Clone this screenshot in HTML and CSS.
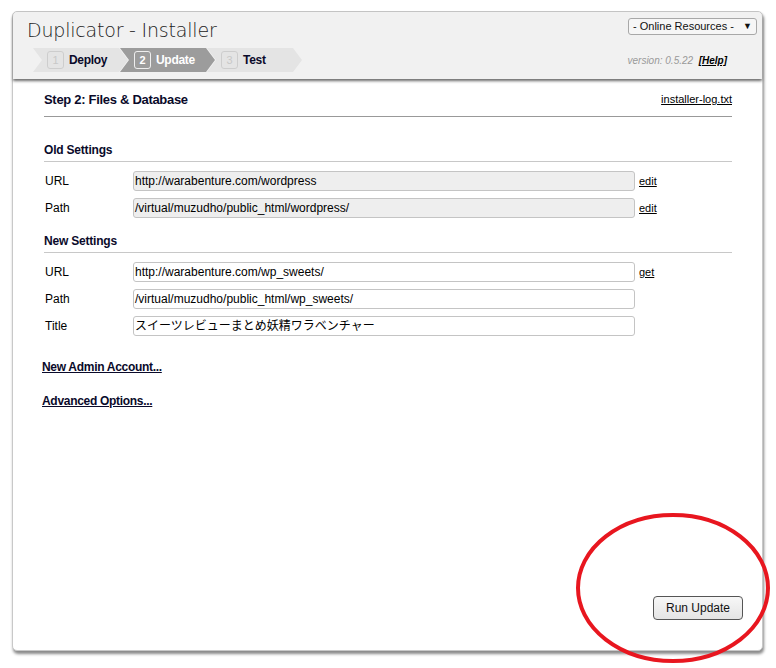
FILE: index.html
```html
<!DOCTYPE html>
<html>
<head>
<meta charset="utf-8">
<link rel="stylesheet" href="styles.css">
</head>
<body>
<div class="wrap">
  <div class="header">
    <div class="head-left">
      <div class="title">Duplicator - Installer</div>
      <div class="steps">
        <div class="step"><span class="num">1</span><span class="lbl">Deploy</span></div>
        <div class="step active"><span class="num">2</span><span class="lbl">Update</span></div>
        <div class="step"><span class="num">3</span><span class="lbl">Test</span></div>
      </div>
    </div>
    <div class="head-right">
      <div class="select"><span>- Online Resources -</span><span class="arrow">&#9660;</span></div>
      <div class="version">version: 0.5.22 &nbsp;<a class="help">[Help]</a></div>
    </div>
  </div>
  <div class="content">
    <div class="step-title">
      <span>Step 2: Files &amp; Database</span>
      <a class="log">installer-log.txt</a>
    </div>

    <div class="section">Old Settings</div>
    <div class="row">
      <label>URL</label>
      <div class="input ro">http://warabenture.com/wordpress</div>
      <a class="act">edit</a>
    </div>
    <div class="row">
      <label>Path</label>
      <div class="input ro">/virtual/muzudho/public_html/wordpress/</div>
      <a class="act">edit</a>
    </div>

    <div class="section second">New Settings</div>
    <div class="row">
      <label>URL</label>
      <div class="input">http://warabenture.com/wp_sweets/</div>
      <a class="act">get</a>
    </div>
    <div class="row">
      <label>Path</label>
      <div class="input">/virtual/muzudho/public_html/wp_sweets/</div>
    </div>
    <div class="row">
      <label>Title</label>
      <div class="input">スイーツレビューまとめ妖精ワラベンチャー</div>
    </div>

    <a class="toggle first">New Admin Account...</a>
    <a class="toggle">Advanced Options...</a>

    <div class="footer">
      <button class="btn">Run Update</button>
    </div>
  </div>
</div>
<svg class="circle" width="776" height="668" viewBox="0 0 776 668">
  <ellipse cx="673" cy="588" rx="95" ry="73" fill="none" stroke="#e8161f" stroke-width="4"/>
</svg>
</body>
</html>
```

FILE: styles.css
```css
html, body {
  margin: 0;
  padding: 0;
  background: #fff;
}
body {
  font-family: "Liberation Sans", "Noto Sans CJK JP", sans-serif;
  font-size: 12px;
  color: #000;
  width: 776px;
  height: 668px;
  position: relative;
  overflow: hidden;
}
.wrap {
  margin: 11px 0 0 12px;
  width: 749px;
  height: 638px;
  border: 1px solid #c8c8c8;
  border-radius: 5px;
  box-shadow: 1px 3px 3px #8a8a8a;
  background: #fff;
  display: flex;
  flex-direction: column;
}
.header {
  height: 67px;
  background: #f1f1f1;
  border-radius: 5px 5px 0 0;
  box-shadow: 0 2px 3px #6a6a6a;
  display: flex;
  justify-content: space-between;
  padding: 0 5px 0 14px;
  position: relative;
  z-index: 1;
}
.title {
  font-family: "DejaVu Sans", sans-serif;
  font-weight: 200;
  font-size: 19px;
  color: #222;
  margin-top: 6px;
  line-height: 24px;
  letter-spacing: -0.2px;
}
.steps {
  display: flex;
  margin: 6px 0 0 6px;
}
.step {
  width: 95px;
  height: 24px;
  background: #e4e4e4;
  clip-path: polygon(0 0, 86px 0, 95px 50%, 86px 100%, 0 100%, 9px 50%);
  display: flex;
  align-items: center;
  padding-left: 14px;
  box-sizing: border-box;
  margin-right: -8px;
}
.step.active {
  background: #9c9c9c;
}
.num {
  width: 15px;
  height: 16px;
  border: 1px solid #cdcdcd;
  border-radius: 3px;
  color: #c8c8c8;
  font-size: 11px;
  line-height: 16px;
  text-align: center;
  margin-right: 5px;
}
.lbl {
  font-weight: bold;
  font-size: 12px;
  color: #0a0a2a;
  letter-spacing: -0.3px;
}
.step.active .num {
  border-color: #eee;
  color: #fff;
  font-weight: bold;
}
.step.active .lbl {
  color: #fff;
}
.head-right {
  display: flex;
  flex-direction: column;
  align-items: flex-end;
}
.select {
  margin-top: 6px;
  width: 129px;
  height: 17px;
  box-sizing: border-box;
  border: 1px solid #a8a8a8;
  border-radius: 3px;
  background: #f6f6f6;
  font-size: 11px;
  line-height: 15px;
  padding: 0 4px 0 4px;
  display: flex;
  justify-content: space-between;
  color: #111;
}
.arrow {
  font-size: 9px;
}
.version {
  margin-top: 20px;
  margin-right: 30px;
  font-size: 10px;
  font-style: italic;
  color: #999;
}
.help {
  color: #000;
  font-weight: bold;
  text-decoration: underline;
}
.content {
  flex: 1;
  padding: 10px 30px 0 31px;
  display: flex;
  flex-direction: column;
}
.step-title {
  display: flex;
  justify-content: space-between;
  align-items: center;
  font-size: 13px;
  font-weight: bold;
  color: #0a0a2a;
  height: 20px;
  padding-bottom: 7px;
  border-bottom: 1px solid #999;
  letter-spacing: -0.3px;
}
.log {
  font-weight: normal;
  font-size: 11px;
  color: #000;
  text-decoration: underline;
  letter-spacing: 0;
}
.section {
  margin-top: 25px;
  font-size: 12px;
  font-weight: bold;
  color: #0a0a2a;
  padding-bottom: 3px;
  border-bottom: 1px solid #c8c8c8;
  letter-spacing: -0.2px;
  line-height: 16px;
}
.section.second {
  margin-top: 15px;
}
.section + .row {
  margin-top: 9px;
}
.row {
  display: flex;
  align-items: center;
  height: 20px;
  margin-top: 7px;
}
.row label {
  width: 89px;
  padding-left: 1px;
  box-sizing: border-box;
}
.input {
  width: 502px;
  height: 20px;
  box-sizing: border-box;
  border: 1px solid #c4c4c4;
  border-radius: 3px;
  background: #fff;
  line-height: 18px;
  padding-left: 1px;
  white-space: nowrap;
  overflow: hidden;
}
.input.ro {
  background: #eee;
}
.act {
  margin-left: 4px;
  font-size: 11px;
  text-decoration: underline;
  color: #000;
}
.toggle {
  display: block;
  font-weight: bold;
  text-decoration: underline;
  color: #0a0a2a;
  margin-left: -2px;
  margin-top: 18px;
  line-height: 16px;
  letter-spacing: -0.3px;
}
.toggle.first {
  margin-top: 23px;
}
.footer {
  flex: 1;
  display: flex;
  justify-content: flex-end;
  align-items: flex-end;
  padding-bottom: 30px;
  margin-right: -11px;
}
.btn {
  font-family: "Liberation Sans", sans-serif;
  font-size: 12px;
  width: 90px;
  height: 24px;
  border: 1px solid #555;
  border-radius: 4px;
  background: linear-gradient(#f7f7f7, #e4e4e4);
  color: #111;
  padding: 0;
}
.circle {
  position: absolute;
  left: 0;
  top: 0;
  pointer-events: none;
}
```
